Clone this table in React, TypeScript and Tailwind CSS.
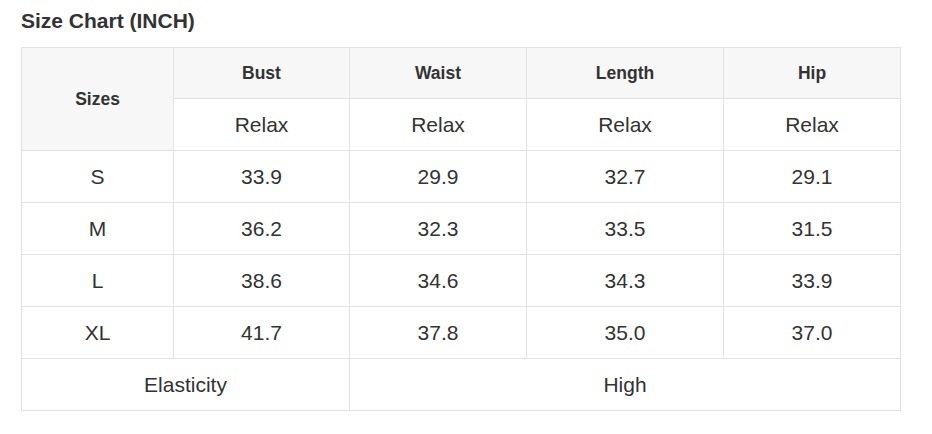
import React from 'react';

const rows = [
  { size: 'S', bust: '33.9', waist: '29.9', length: '32.7', hip: '29.1' },
  { size: 'M', bust: '36.2', waist: '32.3', length: '33.5', hip: '31.5' },
  { size: 'L', bust: '38.6', waist: '34.6', length: '34.3', hip: '33.9' },
  { size: 'XL', bust: '41.7', waist: '37.8', length: '35.0', hip: '37.0' },
];

const cell = 'border border-[#e2e2e2] text-center align-middle h-[52px] p-0';
const headCell = 'border border-[#e2e2e2] text-center align-middle h-[51px] p-0';

export default function App() {
  return (
    <div className="bg-white w-[932px] h-[434px] pl-[21px] pt-[9px] text-[#333] font-['Liberation_Sans',Arial,sans-serif]">
      <h2 className="text-[21px] font-bold leading-[24px] mb-[14px]">Size Chart (INCH)</h2>
      <table className="table-fixed border-collapse w-[879px]">
        <colgroup>
          <col className="w-[152px]" />
          <col className="w-[176px]" />
          <col className="w-[177px]" />
          <col className="w-[197px]" />
          <col className="w-[177px]" />
        </colgroup>
        <thead>
          <tr className="bg-[#f7f7f7] text-[17.5px] font-bold">
            <th rowSpan={2} className={cell}>Sizes</th>
            <th className={headCell}>Bust</th>
            <th className={headCell}>Waist</th>
            <th className={headCell}>Length</th>
            <th className={headCell}>Hip</th>
          </tr>
          <tr className="text-[21px] font-normal">
            <td className={`${cell} bg-white`}>Relax</td>
            <td className={`${cell} bg-white`}>Relax</td>
            <td className={`${cell} bg-white`}>Relax</td>
            <td className={`${cell} bg-white`}>Relax</td>
          </tr>
        </thead>
        <tbody className="text-[21px]">
          {rows.map((r) => (
            <tr key={r.size}>
              <td className={cell}>{r.size}</td>
              <td className={cell}>{r.bust}</td>
              <td className={cell}>{r.waist}</td>
              <td className={cell}>{r.length}</td>
              <td className={cell}>{r.hip}</td>
            </tr>
          ))}
          <tr>
            <td colSpan={2} className={cell}>Elasticity</td>
            <td colSpan={3} className={cell}>High</td>
          </tr>
        </tbody>
      </table>
    </div>
  );
}
